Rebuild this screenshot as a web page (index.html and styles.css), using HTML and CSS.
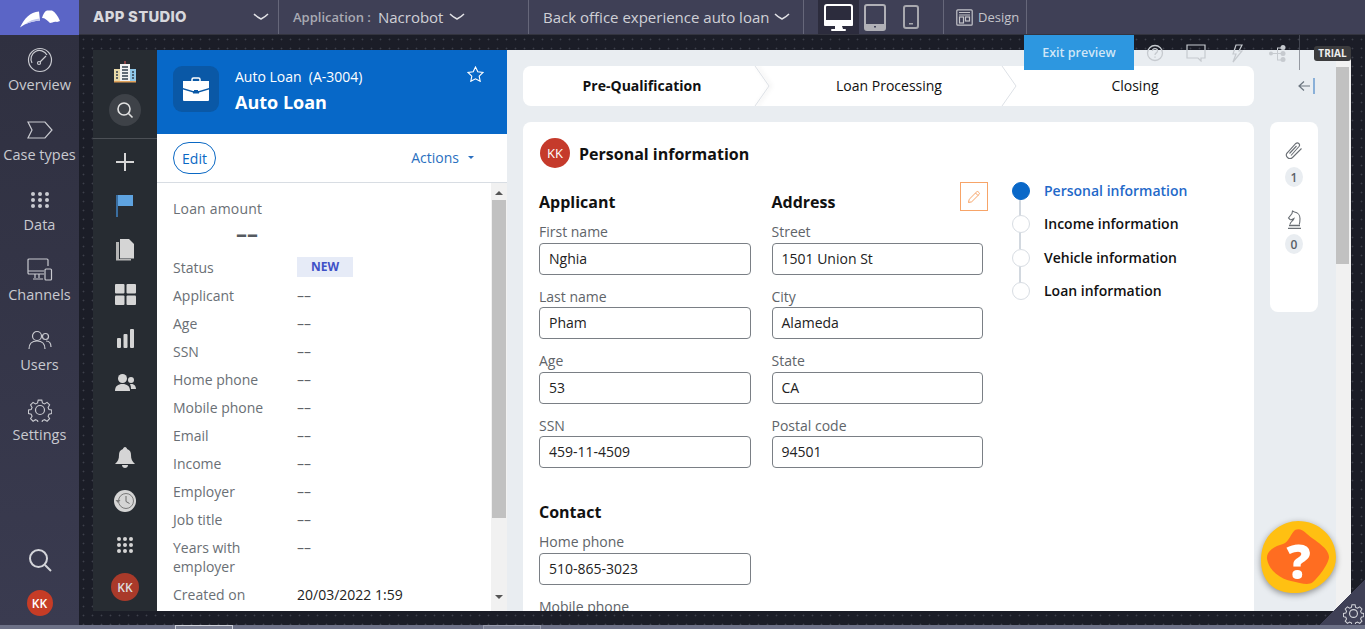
FILE: index.html
```html
<!DOCTYPE html>
<html lang="en">
<head>
<meta charset="utf-8">
<title>App Studio - Auto Loan</title>
<link rel="stylesheet" href="styles.css">
</head>
<body>
<div class="app">
  <header class="topbar">
    <div class="logo">
      <svg width="42" height="20" viewBox="0 0 42 20"><path d="M1 19.500C5 11 11 4 20 3.500l1 9C14 13 7 15 1 19.500z" fill="#fff"/><path d="M6 16c4-3 9-5 14.500-5.500l.5 2C15 13 10 14.500 6 16z" fill="#c3c8ee"/><path d="M23 10C24 6 26 3 28 2.500L33 2.500C36 4 39 8 41 13L38 14C35 13 33 15 31 15 28 12 26 10 23 10z" fill="#fff"/></svg>
    </div>
    <div class="tb tb-app"><span class="app-name">APP STUDIO</span><svg class="chev" width="16" height="8" viewBox="0 0 16 8"><path d="M1 1c3 3 5 4 7 5 2-1 4-2 7-5" /></svg></div>
    <div class="tb tb-appl"><span class="muted">Application :</span><span class="tb-val">Nacrobot</span><svg class="chev" width="16" height="8" viewBox="0 0 16 8"><path d="M1 1c3 3 5 4 7 5 2-1 4-2 7-5" /></svg></div>
    <div class="tb tb-exp"><span class="tb-val">Back office experience auto loan</span><svg class="chev" width="16" height="8" viewBox="0 0 16 8"><path d="M1 1c3 3 5 4 7 5 2-1 4-2 7-5" /></svg></div>
    <div class="tb tb-dev">
      <div class="dev dev-on"><svg width="29" height="27" viewBox="0 0 29 27"><rect x="1" y="1" width="27" height="20" rx="2" fill="#2c2c3d" stroke="#fff" stroke-width="2"/><rect x="0" y="16" width="29" height="6" rx="1" fill="#fff"/><path d="M11 22h7l1 3h-8z" fill="#fff"/><rect x="7" y="25" width="15" height="2" rx="1" fill="#fff"/></svg></div>
      <div class="dev dev-tab"><svg width="22" height="27" viewBox="0 0 22 27"><rect x="1" y="1" width="20" height="25" rx="2" fill="none" stroke="#b0b0b6" stroke-width="2"/><rect x="1" y="20" width="20" height="6" fill="#b0b0b6"/><rect x="10" y="22" width="2" height="1.500" fill="#3f4056"/></svg></div>
      <div class="dev dev-ph"><svg width="16" height="24" viewBox="0 0 16 24"><rect x="1" y="1" width="14" height="22" rx="2" fill="none" stroke="#a8a8ae" stroke-width="2"/><rect x="6" y="18" width="4" height="1.500" fill="#a8a8ae"/></svg></div>
    </div>
    <div class="tb tb-design"><svg width="17" height="17" viewBox="0 0 17 17" fill="none" stroke="#c4c4ca" stroke-width="1.200"><rect x=".8" y=".8" width="15.400" height="15.400" rx="1"/><path d="M3 3.500h11M3 6h11"/><rect x="3.500" y="8" width="4" height="6"/><rect x="9.500" y="8" width="4" height="4"/></svg><span class="muted-l">Design</span></div>
  </header>

  <div class="body">
    <nav class="side">
      <a class="side-item"><span class="side-ic"><svg width="26" height="26" viewBox="0 0 26 26" fill="none" stroke="#c9cad0" stroke-width="1.200"><circle cx="13" cy="13" r="11.500"/><path d="M5 16a8.500 8.500 0 0 1 15-8M13 15l6-6"/><circle cx="12" cy="16" r="1.500"/></svg></span><span>Overview</span></a>
      <a class="side-item"><span class="side-ic"><svg width="26" height="18" viewBox="0 0 26 18" fill="none" stroke="#c9cad0" stroke-width="1.200"><path d="M1 1h17l7 8-7 8H1l4-8z"/></svg></span><span>Case types</span></a>
      <a class="side-item"><span class="side-ic"><svg width="20" height="18" viewBox="0 0 20 18" fill="#c9cad0"><circle cx="3" cy="3" r="2"/><circle cx="10" cy="3" r="2"/><circle cx="17" cy="3" r="2"/><circle cx="3" cy="9" r="2"/><circle cx="10" cy="9" r="2"/><circle cx="17" cy="9" r="2"/><circle cx="3" cy="15" r="2"/><circle cx="10" cy="15" r="2"/><circle cx="17" cy="15" r="2"/></svg></span><span>Data</span></a>
      <a class="side-item"><span class="side-ic"><svg width="26" height="24" viewBox="0 0 26 24" fill="none" stroke="#c9cad0" stroke-width="1.200"><path d="M17 16H2a1 1 0 0 1-1-1V2a1 1 0 0 1 1-1h18a1 1 0 0 1 1 1v6M1 13h16M8 16v4M12 16v4M6 21h10"/><rect x="18" y="11" width="6.500" height="11" rx="1"/></svg></span><span>Channels</span></a>
      <a class="side-item"><span class="side-ic"><svg width="24" height="20" viewBox="0 0 24 20" fill="none" stroke="#c9cad0" stroke-width="1.200"><circle cx="9" cy="6" r="4.500"/><path d="M1 19c0-5 3-8 8-8s8 3 8 8"/><circle cx="17.500" cy="6.500" r="3"/><path d="M18 11c3 0 5 2 5 6"/></svg></span><span>Users</span></a>
      <a class="side-item"><span class="side-ic"><svg width="24" height="24" viewBox="0 0 24 24" fill="none" stroke="#c9cad0" stroke-width="1.200"><path d="M10 1h4l.7 3.200 2.300 1 2.900-1.700 2.800 2.800-1.700 2.900 1 2.300 3 .5v4l-3 .7-1 2.300 1.700 2.700-2.800 2.800-2.900-1.700-2.300 1-.7 3h-4l-.7-3-2.300-1-2.700 1.700-2.800-2.800 1.700-2.700-1-2.300-3-.7v-4l3-.5 1-2.300-1.700-2.900 2.800-2.800 2.700 1.700 2.300-1z" transform="translate(1.200 1.200) scale(.9)"/><circle cx="12" cy="12" r="4.500"/></svg></span><span>Settings</span></a>
      <div class="side-foot">
        <svg width="24" height="24" viewBox="0 0 24 24" fill="none" stroke="#d4d5da" stroke-width="2"><circle cx="10.500" cy="10.500" r="8.500"/><path d="M17 17l6 6"/></svg>
        <div class="avatar av-side">KK</div>
      </div>
    </nav>

    <main class="canvas">
      <div class="frame">
        <aside class="nav">
          <svg class="nav-city" width="22" height="22" viewBox="0 0 22 22"><rect x="0" y="8" width="6" height="13" fill="#e8d9a8"/><rect x="16" y="8" width="6" height="13" fill="#8fc7e8"/><rect x="6" y="3" width="10" height="18" fill="#f2f2f2"/><path d="M11 0v3" stroke="#e85a5a"/><path d="M8 6h6M8 9h6M8 12h6M8 15h6M8 18h6M2 11h2M2 14h2M2 17h2M18 11h2M18 14h2M18 17h2" stroke="#33404e" stroke-width="1.300"/><rect x="0" y="20" width="22" height="1.500" fill="#e2a25b"/></svg>
          <div class="nav-search"><svg width="18" height="18" viewBox="0 0 18 18" fill="none" stroke="#e2e2e2" stroke-width="1.600"><circle cx="8" cy="8" r="6"/><path d="M12.500 12.500l4 4"/></svg></div>
          <div class="nav-rule"></div>
          <div class="slots">
            <span class="slot"><svg width="18" height="18" viewBox="0 0 18 18" stroke="#d7d7d7" stroke-width="2"><path d="M9 0v18M0 9h18"/></svg></span>
            <span class="slot"><svg width="18" height="22" viewBox="0 0 18 22"><rect x="0" y="0" width="2" height="22" fill="#3a6ea0"/><rect x="2" y="0" width="15" height="11" fill="#5ea3e0"/></svg></span>
            <span class="slot"><svg width="20" height="22" viewBox="0 0 20 22"><path d="M1 3h3v17h12v1.500H1z" fill="#b5b5b5"/><path d="M5 0h9l5 5v14.500H5z" fill="#d5d5d5"/></svg></span>
            <span class="slot"><svg width="21" height="21" viewBox="0 0 21 21" fill="#d5d5d5"><rect width="9.500" height="9.500" rx="1"/><rect x="11.500" width="9.500" height="9.500" rx="1"/><rect y="11.500" width="9.500" height="9.500" rx="1"/><rect x="11.500" y="11.500" width="9.500" height="9.500" rx="1"/></svg></span>
            <span class="slot"><svg width="17" height="19" viewBox="0 0 17 19" fill="#d5d5d5"><rect y="9" width="4" height="10" rx="1"/><rect x="6.500" y="5" width="4" height="14" rx="1"/><rect x="13" y="0" width="4" height="19" rx="1"/></svg></span>
            <span class="slot"><svg width="21" height="17" viewBox="0 0 21 17" fill="#d5d5d5"><circle cx="7.500" cy="4.500" r="4.500"/><path d="M0 17c0-5 3-7 7.500-7s7.500 2 7.500 7z"/><circle cx="16" cy="6" r="3"/><path d="M15 10c3.500-.5 6 1.500 6 5h-5c0-2-.300-3.500-1-5z"/></svg></span>
          </div>
          <div class="nav-low">
            <span class="slot"><svg width="20" height="21" viewBox="0 0 20 21" fill="#d5d5d5"><path d="M10 0c1 0 2 1 2 2 3 1 4 3 4 6 0 4 1 6 4 9H0c3-3 4-5 4-9 0-3 1-5 4-6 0-1 1-2 2-2z"/><path d="M7 18h6c0 2-1.500 3-3 3s-3-1-3-3z"/></svg></span>
            <span class="slot"><svg width="22" height="22" viewBox="0 0 22 22"><circle cx="11" cy="11" r="11" fill="#d5d5d5"/><circle cx="12" cy="11" r="7.500" fill="none" stroke="#7a7a7a"/><path d="M12 6v5.500l3.500 2" fill="none" stroke="#6a6a6a"/><path d="M1.500 10l2.500 3 2.500-3z" fill="#7a7a7a"/></svg></span>
            <span class="slot"><svg width="16" height="16" viewBox="0 0 16 16" fill="#d5d5d5"><circle cx="2" cy="2" r="2"/><circle cx="8" cy="2" r="2"/><circle cx="14" cy="2" r="2"/><circle cx="2" cy="8" r="2"/><circle cx="8" cy="8" r="2"/><circle cx="14" cy="8" r="2"/><circle cx="2" cy="14" r="2"/><circle cx="8" cy="14" r="2"/><circle cx="14" cy="14" r="2"/></svg></span>
            <div class="avatar av-nav">KK</div>
          </div>
        </aside>

        <section class="case">
          <div class="case-head">
            <div class="case-tile"><svg width="26" height="24" viewBox="0 0 26 24"><path d="M9 4V2.500A1.500 1.500 0 0 1 10.500 1h5A1.500 1.500 0 0 1 17 2.500V4" fill="none" stroke="#fff" stroke-width="1.500"/><path d="M0 4h26v7l-10 3h-6L0 11z" fill="#fff"/><path d="M0 12.500l10 3v1h6v-1l10-3V23a1 1 0 0 1-1 1H1a1 1 0 0 1-1-1z" fill="#fff"/><rect x="11" y="13" width="4" height="2.500" fill="#0a58a6"/></svg></div>
            <div class="case-titles"><div class="case-id">Auto Loan&nbsp; (A-3004)</div><div class="case-name">Auto Loan</div></div>
            <svg class="case-star" width="17" height="16" viewBox="0 0 17 16" fill="none" stroke="#fff" stroke-width="1.100"><path d="M8.500 1l2.300 4.800 5.200.7-3.800 3.600 1 5.200-4.700-2.500-4.700 2.500 1-5.200L1 6.500l5.200-.7z"/></svg>
          </div>
          <div class="case-actions"><span class="btn-edit">Edit</span><span class="actions">Actions<i class="caret"></i></span></div>
          <div class="case-body">
            <div class="case-list">
              <div class="loan-label">Loan amount</div>
              <div class="loan-value">––</div>
              <dl class="facts">
                <dt>Status</dt><dd class="dd-status"><span class="badge">NEW</span></dd>
                <dt>Applicant</dt><dd>––</dd>
                <dt>Age</dt><dd>––</dd>
                <dt>SSN</dt><dd>––</dd>
                <dt>Home phone</dt><dd>––</dd>
                <dt>Mobile phone</dt><dd>––</dd>
                <dt>Email</dt><dd>––</dd>
                <dt>Income</dt><dd>––</dd>
                <dt>Employer</dt><dd>––</dd>
                <dt>Job title</dt><dd>––</dd>
                <dt>Years with employer</dt><dd>––</dd>
                <dt>Created on</dt><dd class="dd-date">20/03/2022 1:59</dd>
              </dl>
            </div>
            <div class="sbar sbar-case"><i class="arr-up"></i><div class="thumb thumb-case"></div><i class="arr-down"></i></div>
          </div>
        </section>

        <section class="work">
          <div class="work-main">
            <div class="stages-row">
              <div class="stages">
                <div class="stage stage-on">Pre-Qualification<svg class="chevron chevron-shadow" width="16" height="40" viewBox="0 0 16 40" fill="none" stroke="#dde1e6"><path d="M1 0l14 20L1 40"/></svg></div>
                <div class="stage stage-mid">Loan Processing<svg class="chevron" width="16" height="40" viewBox="0 0 16 40" fill="none" stroke="#dde1e6"><path d="M1 0l14 20L1 40"/></svg></div>
                <div class="stage stage-end">Closing</div>
              </div>
              <svg class="collapse" width="17" height="16" viewBox="0 0 17 16" fill="none" stroke="#6c7680" stroke-width="1.200"><path d="M12 8H1M6 3.500L1 8l5 4.500"/><path d="M16 0v16" stroke="#4a87c9"/></svg>
            </div>
            <div class="work-row">
              <article class="card">
                <div class="card-head"><div class="avatar av-card">KK</div><h2>Personal information</h2></div>
                <div class="card-body">
                  <div class="form">
                    <div class="form-cols">
                      <div class="col">
                        <h3>Applicant</h3>
                        <label class="fld"><span>First name</span><b>Nghia</b></label>
                        <label class="fld"><span>Last name</span><b>Pham</b></label>
                        <label class="fld"><span>Age</span><b>53</b></label>
                        <label class="fld"><span>SSN</span><b>459-11-4509</b></label>
                      </div>
                      <div class="col">
                        <h3>Address</h3>
                        <label class="fld"><span>Street</span><b>1501 Union St</b></label>
                        <label class="fld"><span>City</span><b>Alameda</b></label>
                        <label class="fld"><span>State</span><b>CA</b></label>
                        <label class="fld"><span>Postal code</span><b>94501</b></label>
                      </div>
                    </div>
                    <div class="col col-contact">
                      <h3>Contact</h3>
                      <label class="fld"><span>Home phone</span><b>510-865-3023</b></label>
                      <label class="fld"><span>Mobile phone</span><b></b></label>
                    </div>
                  </div>
                  <div class="edit-box"><svg width="14" height="14" viewBox="0 0 14 14" fill="none" stroke="#f7a468" stroke-width="1"><path d="M1.500 12.500l.7-3.200L9.500 2a1.300 1.300 0 0 1 1.900 0l.6.600a1.300 1.300 0 0 1 0 1.900L4.700 11.800zM8.500 3l2.500 2.500"/></svg></div>
                  <ol class="steps">
                    <li class="step step-on">Personal information</li>
                    <li class="step">Income information</li>
                    <li class="step">Vehicle information</li>
                    <li class="step step-last">Loan information</li>
                  </ol>
                </div>
              </article>
              <aside class="mini">
                <svg width="18" height="19" viewBox="0 0 18 19" fill="none" stroke="#6a6f75" stroke-width="1.100"><path d="M6 13.500L14 4.500a2.200 2.200 0 0 0-3.200-3L2.500 10.500a3.500 3.500 0 0 0 5 5L16.500 6.500"/><path d="M4.500 11.500L11.500 4"/></svg>
                <span class="count">1</span>
                <svg class="mini-knight" width="15" height="19" viewBox="0 0 15 19" fill="none" stroke="#6a6f75" stroke-width="1.100"><path d="M3 14.500c0-3 3.500-3.500 4-6-1.500 1-3 1.500-4 1L1.500 8 5 3.500 5.500 1 7.500 2c3.500.5 5.500 3.500 5.500 6.500 0 2.500-.3 4.500-.7 6"/><path d="M1 18.500h13M2 15.500h11" stroke-width="1.500"/></svg>
                <span class="count count-2">0</span>
              </aside>
            </div>
          </div>
          <div class="sbar sbar-main"><div class="thumb thumb-main"></div></div>
        </section>
      </div>

      <div class="exit">Exit preview</div>
      <div class="tools">
        <svg width="18" height="18" viewBox="0 0 18 18" fill="none" stroke="#c6cacf" stroke-width="1.300"><circle cx="9" cy="9" r="7.500"/><path d="M6.500 7c0-3.500 5.500-3 5 0 0 2-2.500 1.800-2.500 4M9 12.500v1.300"/></svg>
        <svg width="20" height="18" viewBox="0 0 20 18" fill="none" stroke="#c6cacf" stroke-width="1.200"><path d="M1 1h18v13h-4v3l-3-3H1z"/></svg>
        <svg width="12" height="19" viewBox="0 0 12 19" fill="none" stroke="#c6cacf" stroke-width="1.200"><path d="M5 1h6L8 7h3L2 18l3-8H2z"/></svg>
        <svg width="17" height="17" viewBox="0 0 17 17" fill="#c6cacf"><circle cx="2" cy="8.500" r="2"/><circle cx="14" cy="2.500" r="2.500"/><circle cx="14" cy="8.500" r="2.500"/><circle cx="14" cy="14.500" r="2.500"/><path d="M2 8h6V2.500h4v1H9V8h3v1H9v5.500h3v1H8V9H2z"/></svg>
      </div>
      <div class="tool-line"></div>
      <div class="trial">TRIAL</div>
      <div class="help">
        <svg width="75" height="74" viewBox="0 0 75 74"><path d="M37 0C58 0 75 16 75 36 75 50 66 60 56 66 46 72 32 74 20 70 7 66 0 54 0 40 0 24 6 14 16 7 22 3 29 0 37 0z" fill="#ffc012"/><path d="M34 9C38 7 42 9 46 13 54 20 68 27 68 36 68 42 58 56 52 61 47 65 40 62 30 60 20 58 8 50 6 38 5 30 14 25 22 23 28 21 30 12 34 9z" fill="#ff6d21"/></svg>
        <span class="help-q">?</span>
      </div>
      <div class="corner"><svg width="21" height="21" viewBox="0 0 24 24" fill="none" stroke="#d4d5da" stroke-width="1.300"><path d="M10 1h4l.7 3.200 2.300 1 2.900-1.700 2.800 2.800-1.700 2.900 1 2.300 3 .5v4l-3 .7-1 2.300 1.700 2.700-2.800 2.800-2.900-1.700-2.300 1-.7 3h-4l-.7-3-2.300-1-2.700 1.700-2.800-2.800 1.700-2.700-1-2.300-3-.7v-4l3-.5 1-2.300-1.700-2.900 2.800-2.800 2.700 1.700 2.300-1z" transform="translate(1.200 1.200) scale(.9)"/><circle cx="12" cy="12" r="4.500"/></svg></div>
    </main>
  </div>
  <footer class="strip"><span class="strip-tab"></span><span class="strip-tab strip-tab-2"></span></footer>
</div>
</body>
</html>
```
FILE: styles.css
```css
*{box-sizing:border-box;margin:0;padding:0}
html,body{height:100%;overflow:hidden}
body{font-family:"Open Sans","Liberation Sans",sans-serif;font-size:14px;color:#111;background:#1b1d27}
.app{display:flex;flex-direction:column;height:629px;width:1365px}

.topbar{display:flex;height:35px;flex:none;background:#3f4056;color:#cfd0d6;border-bottom:1px solid #33343f}
.logo{width:79px;background:#5b65c6;display:flex;align-items:center;justify-content:center;height:35px}
.tb{display:flex;align-items:center;height:34px;border-right:1px solid #66677a;flex:none}
.tb-app{width:200px;padding:0 9px 0 14px;justify-content:space-between}
.app-name{font-family:Inter,"Open Sans",sans-serif;font-weight:800;font-size:14.800px;letter-spacing:.3px;color:#d8d8dd}
.chev{fill:none;stroke:#e2e2e6;stroke-width:1.500}
.tb-appl{width:250px;padding-left:14px;gap:7px}
.muted{font-size:13px;font-weight:600;color:#a9aab3}
.tb-val{font-size:15px;color:#cfd0d6}
.tb-appl .chev{margin-left:-1px}
.tb-exp{width:275px;padding-left:14px;gap:5px}
.tb-dev{width:140px;align-items:stretch}
.dev{display:flex;align-items:center;justify-content:center;flex:none}
.dev-on{width:41px;margin-left:14px;background:#2c2c3d}
.dev-tab{width:32px}
.dev-ph{width:40px}
.tb-design{width:83px;gap:5px;padding-left:12px}
.muted-l{font-size:13px;color:#c4c4ca}

.body{display:flex;flex:1;min-height:0}
.side{width:79px;flex:none;background:linear-gradient(#2f3040,#3a3b50);display:flex;flex-direction:column;align-items:center;padding-top:5px}
.side-item{display:flex;flex-direction:column;align-items:center;height:70px;color:#c9cad0;font-size:14.500px;line-height:20px;white-space:nowrap;padding-top:5px}
.side-ic{display:flex;align-items:center;justify-content:center;height:30px}
.side-foot{margin-top:auto;display:flex;flex-direction:column;align-items:center;gap:18px;padding-bottom:9px}

.avatar{border-radius:50%;background:#c63c26;color:#fff;display:flex;align-items:center;justify-content:center;font-weight:600;font-size:12px}
.av-side{width:26px;height:26px}
.av-nav{width:28px;height:28px;background:#a93a2a;color:#ddd;margin-top:6px}
.av-card{width:30px;height:30px;background:#c53a2b;font-size:13px;font-weight:400}

.canvas{flex:1;padding:15px 14px 14px;background-color:#1b1d27;background-image:radial-gradient(circle at 4.500px 4.500px,#3d404b 0,#3d404b .8px,transparent 1.100px);background-size:9px 9px;position:relative;min-width:0}
.frame{display:flex;height:561px;overflow:hidden;background:#e9edf1}

.nav{width:64px;flex:none;background:#272c32;display:flex;flex-direction:column;align-items:center;padding-top:11px}
.nav-city{flex:none}
.nav-search{width:32px;height:32px;border-radius:50%;background:#3e4248;display:flex;align-items:center;justify-content:center;margin-top:11px;flex:none}
.nav-rule{width:64px;height:1px;background:#4c5056;margin-top:12px;flex:none}
.slots{margin-top:1px;flex:none}
.slot{display:flex;align-items:center;justify-content:center;width:64px;height:44px}
.nav-low{margin-top:auto;display:flex;flex-direction:column;align-items:center;padding-bottom:10px}

.case{width:350px;flex:none;background:#fff;display:flex;flex-direction:column;min-height:0}
.case-head{height:84px;flex:none;background:#0768c8;display:flex;padding:16px;color:#fff;position:relative}
.case-tile{width:46px;height:46px;border-radius:9px;background:#0a58a6;display:flex;align-items:center;justify-content:center;flex:none}
.case-titles{margin-left:16px;padding-top:1px}
.case-id{font-size:14px;line-height:20px}
.case-name{font-size:18px;font-weight:700;line-height:30px}
.case-star{margin-left:auto;margin-right:7px}
.case-actions{height:49px;flex:none;border-bottom:1px solid #d8dde3;display:flex;align-items:center;justify-content:space-between;padding:0 33px 0 16px}
.btn-edit{height:32px;width:43px;border:1px solid #0a68c4;border-radius:16px;color:#0a68c4;display:flex;align-items:center;justify-content:center;font-size:14px}
.actions{color:#2a6fc0;font-size:14px;display:flex;align-items:center;gap:9px;padding-bottom:2px}
.caret{width:0;height:0;border:3px solid transparent;border-top:3px solid #2a6fc0;margin-top:3px}
.case-body{flex:1;display:flex;min-height:0;overflow:hidden}
.case-list{flex:1;padding:16px 0 0 16px;color:#6a6f75}
.loan-label{line-height:20px;font-weight:500;letter-spacing:.2px}
.loan-value{width:148px;text-align:center;font-size:22px;font-weight:700;line-height:28px;color:#555a60;margin-bottom:11px}
.facts{display:grid;grid-template-columns:124px 1fr;row-gap:9px;line-height:19px}
.facts dt{width:100px;color:#6a6f75;font-weight:500}
.facts dd{color:#5f6368}
.facts .dd-date{color:#222}
.dd-status{height:19px}
.badge{display:block;width:56px;height:20px;line-height:20px;margin-top:-1px;text-align:center;background:#e6ebf7;color:#3f51c7;font-weight:700;font-size:12px}
.sbar{width:15px;background:#f1f1f1;flex:none;position:relative}
.sbar-case{width:16px;display:flex;flex-direction:column;align-items:center;padding:6px 1px}
.arr-up,.arr-down{width:0;height:0;border:4px solid transparent;flex:none}
.arr-up{border-bottom:4px solid #555;margin-top:-2px}
.arr-down{border-top:4px solid #555;margin-top:auto;margin-bottom:2px}
.thumb{background:#c1c1c1}
.thumb-case{width:14px;height:318px;margin-top:5px}
.thumb-main{width:13px;height:197px;margin-top:17px}

.work{flex:1;display:flex;min-width:0}
.work-main{flex:1;padding:16px 18px 0 16px;min-width:0}
.stages-row{display:flex;align-items:center}
.stages{width:731px;height:40px;background:#fff;border-radius:8px;display:flex;overflow:hidden;flex:none}
.stage{display:flex;align-items:center;justify-content:center;font-size:14px;position:relative;padding-bottom:2px}
.stage-on{width:246px;font-weight:700;padding-right:8px}
.stage-mid{width:247px;padding-right:7px}
.stage-end{flex:1}
.chevron{position:absolute;right:-1px;top:0}
.chevron-shadow{filter:drop-shadow(2px 0 2px rgba(0,0,0,.15))}
.collapse{margin-left:44px}
.work-row{display:flex;align-items:flex-start;gap:16px;margin-top:16px}
.card{width:731px;height:520px;background:#fff;border-radius:8px;padding:16px;flex:none}
.card-head{display:flex;align-items:center;gap:9px;height:30px;margin-left:1px}
.card-head h2{font-size:16px;font-weight:700;color:#111;padding-top:2px}
.card-body{display:flex;margin-top:16px;padding-top:4px;position:relative}
.form{width:444px;flex:none}
.form-cols{display:flex;gap:21px}
.col{width:212px}
.col h3{font-size:16px;font-weight:700;line-height:28px;color:#111;margin-bottom:6px}
.col-contact{margin-top:18px}
.fld{display:block;height:64.500px}
.fld span{display:block;color:#606469;font-weight:500;line-height:19px;height:20.500px;font-size:14px}
.fld b{display:block;height:32px;border:1px solid #7a7f85;border-radius:4px;line-height:30px;padding-left:9px;font-weight:400;color:#222;font-size:14px}
.edit-box{position:absolute;left:421px;top:-2px;width:28px;height:29px;border:1px solid #f7a468;display:flex;align-items:center;justify-content:center}
.steps{list-style:none;margin-left:29px;margin-top:-7px}
.step{height:33.400px;padding-left:32px;line-height:20px;font-weight:600;font-size:14px;position:relative;color:#111}
.step::before{content:"";position:absolute;left:0;top:1px;width:16px;height:16px;border-radius:50%;background:#fff;border:1px solid #d8dde3;z-index:1}
.step::after{content:"";position:absolute;left:7px;top:15px;width:2px;height:20px;background:#d2d8df}
.step-last::after{display:none}
.step-on{color:#1f69c9}
.step-on::before{background:#0a68c8;border-color:#0a68c8}
.mini{width:48px;height:190px;background:#fff;border-radius:8px;flex:none;display:flex;flex-direction:column;align-items:center;padding-top:20px}
.count{width:18px;height:20px;border-radius:50%;background:#e9edf1;color:#5a6068;font-size:12px;font-weight:600;display:flex;align-items:center;justify-content:center;margin-top:6px}
.count-2{margin-top:5px}
.mini-knight{margin-top:23px}

.exit{position:absolute;left:945px;top:0;width:110px;height:35px;background:#2d97e0;color:#cfe6f7;display:flex;align-items:center;justify-content:center;font-size:12.500px;font-weight:600}
.tools{position:absolute;left:1055px;top:8px;display:grid;grid-template-columns:repeat(4,41px);justify-items:center;align-items:center;height:20px}
.tool-line{position:absolute;left:1220px;top:0;width:1px;height:35px;background:#5d606c;opacity:.6}
.trial{position:absolute;left:1235px;top:11px;width:37px;height:15px;background:#3b3b3d;color:#eee;border-radius:3px;font-size:10px;font-weight:700;line-height:15px;text-align:center}
.help{position:absolute;left:1182px;top:486px;width:75px;height:74px;filter:drop-shadow(0 2px 3px rgba(0,0,0,.4));display:flex;align-items:center;justify-content:center;padding-top:5px}
.help svg{position:absolute;left:0;top:0}
.help-q{position:relative;font-size:48px;font-weight:800;color:#fff;line-height:1}
.corner{position:absolute;right:0;bottom:0;width:45px;height:45px;background:linear-gradient(135deg,transparent 50%,#3f4056 50%);display:flex;align-items:flex-end;justify-content:flex-end;padding:0 1px 1px 0}

.strip{height:4px;flex:none;background:#6d7187;display:flex;padding-left:175px}
.strip-tab{width:58px;height:4px;background:#7c8094;border:1px solid #cfd1da;border-bottom:0}
.strip-tab-2{margin-left:250px;border-color:#999cae}
```
